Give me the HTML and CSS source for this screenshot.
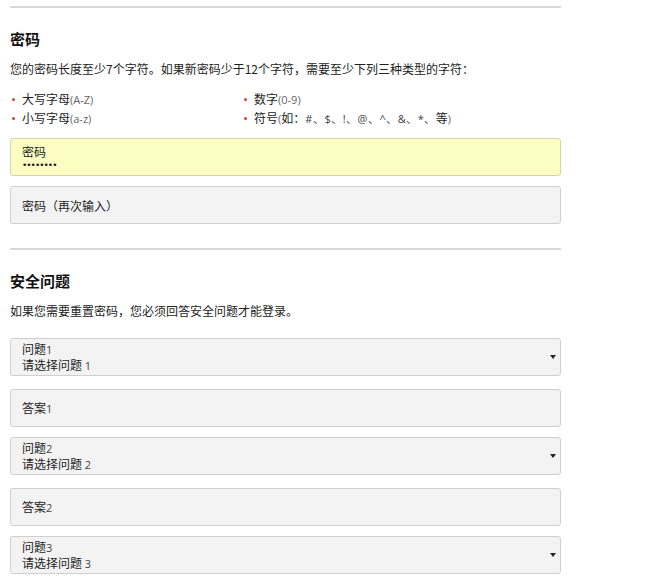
FILE: index.html
```html
<!DOCTYPE html>
<html lang="zh-CN">
<head>
<meta charset="utf-8">
<link rel="stylesheet" href="styles.css">
</head>
<body>
<div class="page">
  <section class="section first">
    <h2 class="title">密码</h2>
    <p class="desc">您的密码长度至少7个字符。如果新密码少于12个字符，需要至少下列三种类型的字符：</p>
    <ul class="rules">
      <li>大写字母<span class="lat">(A-Z)</span></li>
      <li>数字<span class="lat">(0-9)</span></li>
      <li>小写字母<span class="lat">(a-z)</span></li>
      <li>符号<span class="lat">(</span>如：<span class="sym">#、$、!、@、^、&amp;、*、</span>等<span class="lat">)</span></li>
    </ul>
    <div class="field filled">
      <span class="label">密码</span>
      <span class="dots">••••••••</span>
    </div>
    <div class="field single"><span class="ph">密码（再次输入）</span></div>
  </section>
  <section class="section">
    <h2 class="title">安全问题</h2>
    <p class="desc">如果您需要重置密码，您必须回答安全问题才能登录。</p>
    <div class="field select lead"><span class="label">问题<span class="num">1</span></span><span class="val">请选择问题 <span class="num">1</span></span><span class="arrow"></span></div>
    <div class="field single answer"><span class="ph">答案<span class="num">1</span></span></div>
    <div class="field select"><span class="label">问题<span class="num">2</span></span><span class="val">请选择问题 <span class="num">2</span></span><span class="arrow"></span></div>
    <div class="field single answer"><span class="ph">答案<span class="num">2</span></span></div>
    <div class="field select"><span class="label">问题<span class="num">3</span></span><span class="val">请选择问题 <span class="num">3</span></span><span class="arrow"></span></div>
  </section>
</div>
</body>
</html>
```

FILE: styles.css
```css
html, body {
  margin: 0;
  padding: 0;
  background: #fff;
}
body {
  font-family: "Noto Sans CJK SC", "Open Sans", sans-serif;
  color: #222;
  font-size: 12px;
}
.page {
  width: 551px;
  padding-left: 10px;
}
.section {
  border-top: 2px solid #d9d9d9;
  padding-top: 20px;
}
.section.first {
  margin-top: 6px;
  padding-bottom: 24px;
}
.title {
  margin: 0;
  font-size: 15px;
  line-height: 22px;
  font-weight: bold;
  color: #111;
}
.desc {
  margin: 10px 0 0;
  font-size: 12px;
  line-height: 18px;
  color: #222;
}
.rules {
  list-style: none;
  margin: 12px 0 0;
  padding: 0;
  display: grid;
  grid-template-columns: 232px 1fr;
  row-gap: 0;
}
.rules li {
  position: relative;
  padding-left: 12px;
  font-size: 12px;
  line-height: 18px;
  color: #222;
}
.rules li::before {
  content: "";
  position: absolute;
  left: 2px;
  top: 8px;
  width: 3px;
  height: 3px;
  border-radius: 50%;
  background: #d04040;
}
.lat {
  font-family: "Open Sans", sans-serif;
  color: #666;
  font-size: 11px;
}
.sym {
  font-family: "Open Sans", sans-serif;
  color: #444;
  font-size: 11px;
  letter-spacing: 0.5px;
}
.field {
  position: relative;
  box-sizing: border-box;
  height: 38px;
  border: 1px solid #cfcfcf;
  border-radius: 3px;
  background: #f3f3f3;
  padding: 2px 11px;
  display: flex;
  flex-direction: column;
  justify-content: center;
  margin-top: 10px;
}
.field.filled {
  background: #fbfdc1;
  border-color: #d4d4b0;
  margin-top: 10px;
}
.field.lead {
  margin-top: 18px;
}
.label, .val, .ph {
  font-size: 12px;
  line-height: 15px;
  color: #222;
}
.dots {
  font-size: 9px;
  line-height: 12px;
  letter-spacing: -1px;
  color: #222;
  font-family: "DejaVu Sans", sans-serif;
}
.field.single {
  justify-content: center;
}
.field.answer {
  margin-top: 13px;
}
.num {
  font-family: "Open Sans", sans-serif;
  color: #444;
  font-size: 11px;
}
.arrow {
  position: absolute;
  right: 4px;
  top: 16px;
  width: 0;
  height: 0;
  border-left: 3px solid transparent;
  border-right: 3px solid transparent;
  border-top: 4px solid #222;
}
```
